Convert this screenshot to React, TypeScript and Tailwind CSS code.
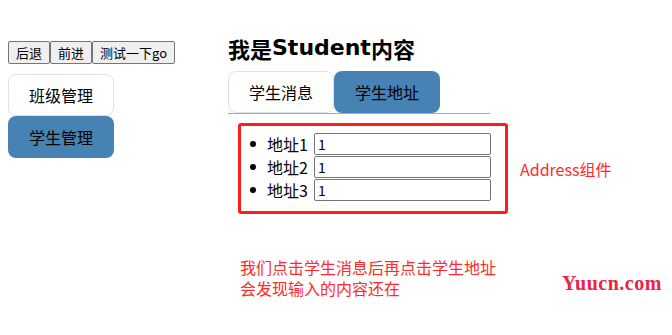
const cjk = 'font-["Microsoft_YaHei","Noto_Sans_CJK_SC",sans-serif]'

export default function App() {
  return (
    <div className={`relative flex h-[335px] w-[672px] bg-white text-black ${cjk}`}>
      {/* left nav */}
      <div className="w-[228px] shrink-0 pl-2 pt-[41px]">
        <div className="flex text-[13px] leading-none">
          <button className="h-[23px] rounded-[2px] border border-[#767676] bg-[#efefef] px-[7px]">后退</button>
          <button className="h-[23px] rounded-[2px] border border-[#767676] bg-[#efefef] px-[7px]">前进</button>
          <button className="h-[23px] rounded-[2px] border border-[#767676] bg-[#efefef] px-[7px]">测试一下go</button>
        </div>
        <div className="mt-[10px] flex flex-col text-[16px]">
          <div className="flex h-[42px] w-[106px] items-center justify-center rounded-lg border border-[#e2e2e2] bg-white">
            班级管理
          </div>
          <div className="flex h-[42px] w-[106px] items-center justify-center rounded-lg bg-[#4682b4]">
            学生管理
          </div>
        </div>
      </div>

      {/* right content */}
      <div className="flex-1 pt-[33px]">
        <h2 className="flex h-[30px] items-center text-[22px] font-bold leading-none">
          我是<span className="font-['DejaVu_Sans',sans-serif]">Student</span>内容
        </h2>
        <div className="mt-[8px] flex w-[262px] border-b border-[#a8a8a8] text-[16px]">
          <div className="flex h-[42px] w-[106px] items-center justify-center rounded-lg border border-[#e2e2e2] bg-white">
            学生消息
          </div>
          <div className="flex h-[42px] w-[106px] items-center justify-center rounded-lg bg-[#4682b4]">
            学生地址
          </div>
        </div>

        <div className="mt-[9px] flex items-center">
          <div className="ml-[10px] flex h-[91px] w-[270px] flex-col gap-[1px] rounded-[3px] border-[3px] border-[#ff1e1e] pl-[9px] pt-[7px]">
            {[1, 2, 3].map((n) => (
              <div key={n} className="flex h-[22px] items-center text-[16px]">
                <span className="h-[6px] w-[6px] rounded-full bg-black" />
                <span className="ml-[11px] w-[47px] shrink-0">地址{n}</span>
                <input
                  defaultValue="1"
                  className="h-[22px] w-[177px] rounded-[2px] border border-[#767676] px-[3px] text-[14px]"
                />
              </div>
            ))}
          </div>
          <span className="ml-[12px] text-[16px] text-[#ff2a2a]">Address组件</span>
        </div>

        <p className="ml-[12px] mt-[43px] text-[16px] leading-[21px] text-[#ff2a2a]">
          我们点击学生消息后再点击学生地址
          <br />
          会发现输入的内容还在
        </p>
      </div>

      <span className="absolute left-[562px] top-[268px] font-['Liberation_Serif',serif] text-[20px] font-bold tracking-[0.5px] text-[#ee2244]">
        Yuucn.com
      </span>
    </div>
  )
}
